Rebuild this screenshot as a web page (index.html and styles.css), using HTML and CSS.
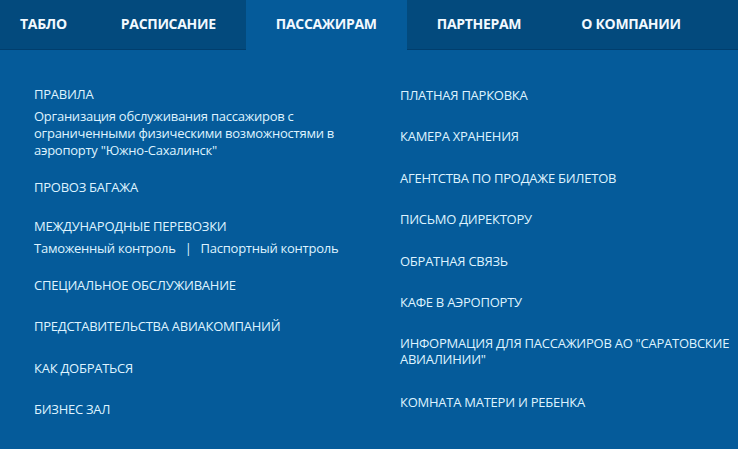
FILE: index.html
```html
<!DOCTYPE html>
<html lang="ru">
<head>
<meta charset="utf-8">
<title>Пассажирам</title>
<link rel="stylesheet" href="styles.css">
</head>
<body>
<nav class="topnav">
  <a class="tab tab-first" href="#">ТАБЛО</a>
  <a class="tab" href="#">РАСПИСАНИЕ</a>
  <a class="tab tab-active" href="#">ПАССАЖИРАМ</a>
  <a class="tab" href="#">ПАРТНЕРАМ</a>
  <a class="tab" href="#">О КОМПАНИИ</a>
</nav>
<div class="menu">
  <ul class="col col-left">
    <li class="item item-sub">
      <a class="title" href="#">ПРАВИЛА</a>
      <div class="sub"><a href="#">Организация обслуживания пассажиров с ограниченными физическими возможностями в аэропорту "Южно-Сахалинск"</a></div>
    </li>
    <li class="item item-tight"><a class="title" href="#">ПРОВОЗ БАГАЖА</a></li>
    <li class="item item-sub">
      <a class="title" href="#">МЕЖДУНАРОДНЫЕ ПЕРЕВОЗКИ</a>
      <div class="sub"><a href="#">Таможенный контроль</a><span class="sep">|</span><a href="#">Паспортный контроль</a></div>
    </li>
    <li class="item"><a class="title" href="#">СПЕЦИАЛЬНОЕ ОБСЛУЖИВАНИЕ</a></li>
    <li class="item"><a class="title" href="#">ПРЕДСТАВИТЕЛЬСТВА АВИАКОМПАНИЙ</a></li>
    <li class="item"><a class="title" href="#">КАК ДОБРАТЬСЯ</a></li>
    <li class="item"><a class="title" href="#">БИЗНЕС ЗАЛ</a></li>
  </ul>
  <ul class="col col-right">
    <li class="item"><a class="title" href="#">ПЛАТНАЯ ПАРКОВКА</a></li>
    <li class="item"><a class="title" href="#">КАМЕРА ХРАНЕНИЯ</a></li>
    <li class="item"><a class="title" href="#">АГЕНТСТВА ПО ПРОДАЖЕ БИЛЕТОВ</a></li>
    <li class="item"><a class="title" href="#">ПИСЬМО ДИРЕКТОРУ</a></li>
    <li class="item"><a class="title" href="#">ОБРАТНАЯ СВЯЗЬ</a></li>
    <li class="item"><a class="title" href="#">КАФЕ В АЭРОПОРТУ</a></li>
    <li class="item item-long"><a class="title" href="#">ИНФОРМАЦИЯ ДЛЯ ПАССАЖИРОВ АО "САРАТОВСКИЕ АВИАЛИНИИ"</a></li>
    <li class="item"><a class="title" href="#">КОМНАТА МАТЕРИ И РЕБЕНКА</a></li>
  </ul>
</div>
</body>
</html>
```
FILE: styles.css
```css
html, body {
  margin: 0;
  padding: 0;
}
body {
  background: #055b9a;
  font-family: "Open Sans", "Noto Sans", sans-serif;
  color: #dff3ff;
  width: 738px;
  height: 449px;
  overflow: hidden;
}
a {
  color: inherit;
  text-decoration: none;
}
.topnav {
  display: flex;
  height: 50px;
  background: #034a7d;
  box-shadow: inset 0 -1px 0 rgba(0, 40, 80, 0.35);
}
.tab {
  display: flex;
  align-items: center;
  padding: 0 30px 4px;
  font-weight: 700;
  font-size: 14px;
  letter-spacing: -0.3px;
  color: #f2f9ff;
}
.tab-first {
  padding-left: 20px;
  padding-right: 24px;
}
.tab-active {
  background: #055b9a;
  box-shadow: none;
}
.menu {
  display: flex;
  padding: 36px 0 0 34px;
  gap: 34px;
}
.col {
  list-style: none;
  margin: 0;
  padding: 0;
  width: 332px;
}
.col-right {
  padding-top: 1px;
}
.item {
  font-size: 13px;
  line-height: 17px;
  letter-spacing: -0.25px;
  margin-bottom: 24.4px;
}
.item-tight {
  margin-bottom: 22px;
}
.item-sub {
  margin-bottom: 20px;
}
.item-sub .title {
  display: block;
  margin-bottom: 5px;
}
.item-long {
  line-height: 16px;
  margin-bottom: 27px;
}
.sub {
  font-size: 13px;
  line-height: 17px;
}
.sep {
  margin: 0 9px;
}
```
